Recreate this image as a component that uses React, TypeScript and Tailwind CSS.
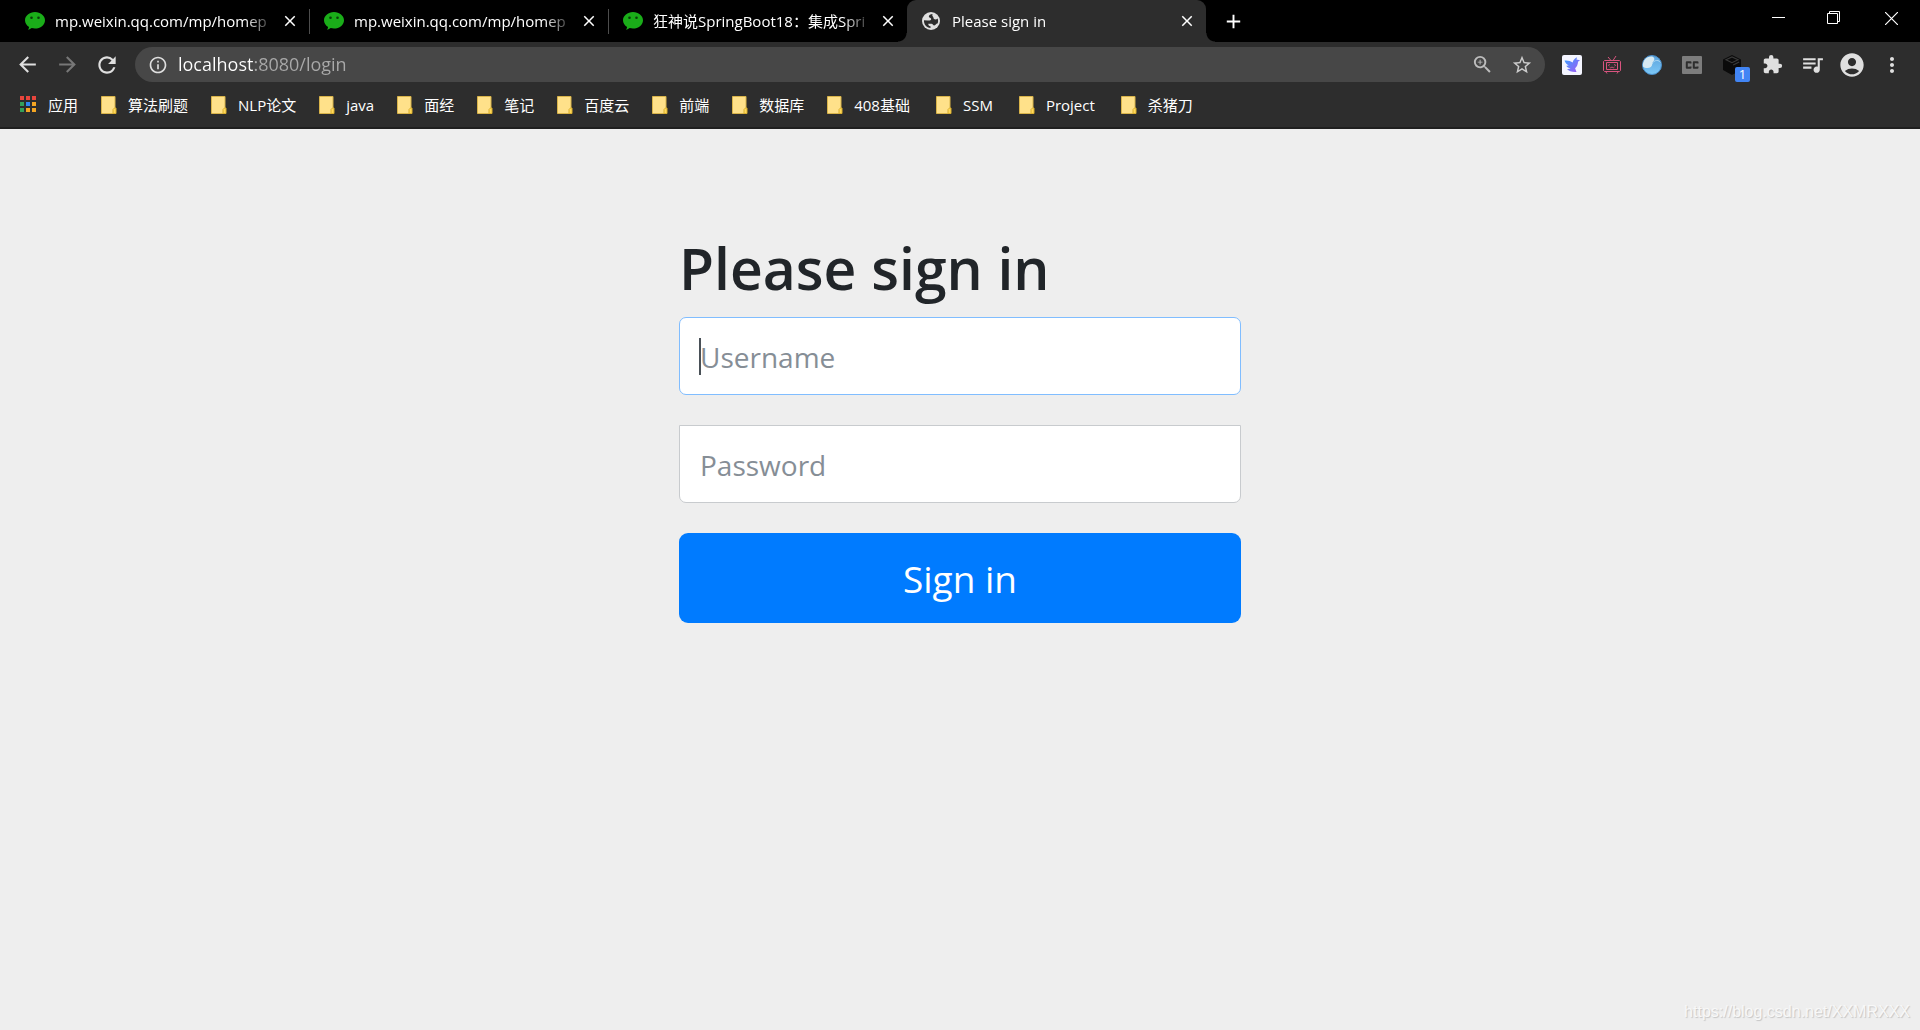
import { ReactNode } from 'react';
import {
  MdArrowBack, MdArrowForward, MdRefresh, MdInfoOutline, MdZoomIn,
  MdStarBorder, MdExtension, MdQueueMusic, MdAccountCircle, MdMoreVert, MdClose, MdAdd
} from 'react-icons/md';

const tabs = [
  { title: 'mp.weixin.qq.com/mp/homep' },
  { title: 'mp.weixin.qq.com/mp/homep' },
  { title: '狂神说SpringBoot18：集成Spri' },
  { title: 'Please sign in', active: true },
];

const bookmarks = [
  { name: '算法刷题' },
  { name: 'NLP论文' },
  { name: 'java' },
  { name: '面经' },
  { name: '笔记' },
  { name: '百度云' },
  { name: '前端' },
  { name: '数据库' },
  { name: '408基础', wide: true },
  { name: 'SSM', wide: true },
  { name: 'Project', wide: true },
  { name: '杀猪刀' },
];

const appColors = [
  '#e8453c', '#e8453c', '#e8453c',
  '#34a05a', '#2f86f0', '#f5a623',
  '#34a05a', '#f5a623', '#f5a623',
];

export default function App() {
  return (
    <div className="flex min-h-screen flex-col bg-[#eeeeee] font-['Open_Sans','Noto_Sans_CJK_SC',sans-serif]">
      <header className="border-b-2 border-[#1f1f1f] bg-[#2d2d2d] text-white">
        <TabStrip />
        <Toolbar />
        <BookmarksBar />
      </header>

      <main className="flex-1 pt-[101px]">
        <form className="mx-auto w-full max-w-[562px]" onSubmit={(e) => e.preventDefault()}>
          <h1 className="mb-[11px] text-[57px] leading-[76px] font-semibold text-[#212529]">Please sign in</h1>
          <div className="relative mb-[30px]">
            <input
              type="text"
              aria-label="Username"
              placeholder="Username"
              className="block h-[78px] w-full rounded-[7px] border border-[#80bdff] bg-white px-5 pt-0.5 text-[28px] text-[#495057] outline-none placeholder:text-[#868e96]"
            />
            {/* caret */}
            <span className="absolute top-[21px] left-5 h-[37px] w-0.5 bg-[#495057]" />
          </div>
          <input
            type="password"
            aria-label="Password"
            placeholder="Password"
            className="mb-[30px] block h-[78px] w-full rounded-b-[7px] border border-[#c8cbce] bg-white px-5 pt-0.5 text-[28px] text-[#495057] outline-none placeholder:text-[#868e96]"
          />
          <button type="submit" className="block h-[90px] w-full rounded-[9px] bg-[#007bff] pt-0.5 text-[37px] text-white">
            Sign in
          </button>
        </form>
      </main>

      <footer className="px-[10px] pb-1 text-right font-['Liberation_Sans',sans-serif] text-[16px] leading-7 text-[#f8f8f8] [text-shadow:1px_1px_1px_#c4c4c4]">
        https://blog.csdn.net/XXMRXXX
      </footer>
    </div>
  );
}

function TabStrip() {
  return (
    <div className="flex h-[42px] items-stretch bg-black pl-[10px]">
      {tabs.map((tab, i) => (
        <Tab key={i} title={tab.title} active={tab.active} divider={i < 2} />
      ))}
      <button aria-label="New tab" className="flex w-[54px] items-center justify-center">
        <MdAdd size={23} />
      </button>
      <div className="ml-auto flex h-9">
        <button aria-label="Minimize" className="flex w-14 items-center justify-center">
          <svg width="13" height="13"><path d="M0 5.5h13" stroke="#fff" /></svg>
        </button>
        <button aria-label="Restore" className="flex w-14 items-center justify-center">
          <svg width="14" height="14" fill="none" stroke="#fff"><path d="M.5 2.5h10v10H.5zM2.5 2.5V.5h10v10h-2" /></svg>
        </button>
        <button aria-label="Close window" className="flex w-[58px] items-center justify-center">
          <svg width="13" height="13" fill="none" stroke="#fff" strokeWidth="1.2"><path d="M0 0l13 13M13 0L0 13" /></svg>
        </button>
      </div>
    </div>
  );
}

function Tab({ title, active, divider }: { title: string, active?: boolean, divider: boolean }) {
  return (
    <div className={`relative flex w-[299px] items-center pr-[9px] pl-[15px] ${active ? 'rounded-t-[9px] bg-[#2d2d2d]' : ''}`}>
      {active ? <GlobeIcon /> : <WeChatIcon />}
      <span className="ml-[10px] flex-1 text-[15px] leading-6 whitespace-nowrap [mask-image:linear-gradient(to_right,#000_190px,transparent_220px)]">
        {title}
      </span>
      <button aria-label="Close tab" className="ml-1 flex w-5 shrink-0 justify-center">
        <MdClose size={18} />
      </button>
      {divider && <span className="absolute top-[9px] -right-px h-[25px] w-px bg-[#4d4d4d]" />}
      {active && (
        <>
          <span className="absolute bottom-0 -left-[9px] size-[9px] bg-[radial-gradient(circle_at_0_0,transparent_8px,#2d2d2d_9px)]" />
          <span className="absolute -right-[9px] bottom-0 size-[9px] bg-[radial-gradient(circle_at_100%_0,transparent_8px,#2d2d2d_9px)]" />
        </>
      )}
    </div>
  );
}

function Toolbar() {
  return (
    <div className="flex h-[45px] items-center pr-2 pl-[7px] text-[#dfdfdf]">
      <ToolButton label="Back"><MdArrowBack size={25} /></ToolButton>
      <ToolButton label="Forward"><MdArrowForward size={25} className="text-[#777777]" /></ToolButton>
      <ToolButton label="Reload"><MdRefresh size={26} /></ToolButton>

      <div className="mr-[7px] ml-2 flex h-[35px] flex-1 items-center rounded-full bg-[#474747] pr-[3px] pl-[13px]">
        <MdInfoOutline size={20} />
        <input
          type="text"
          aria-label="Address"
          defaultValue="localhost:8080/login"
          className="ml-[10px] min-w-0 flex-1 bg-[linear-gradient(to_right,#fff_76px,#a9a9a9_76px)] bg-clip-text text-[18px] text-transparent outline-none"
        />
        <ToolButton label="Zoom"><MdZoomIn size={23} className="text-[#bdbdbd]" /></ToolButton>
        <ToolButton label="Bookmark this page"><MdStarBorder size={22} className="text-[#cccccc]" /></ToolButton>
      </div>

      <ToolButton label="Bird"><BirdIcon /></ToolButton>
      <ToolButton label="Video"><TvIcon /></ToolButton>
      <ToolButton label="Wave"><WaveIcon /></ToolButton>
      <ToolButton label="Captions"><CaptionIcon /></ToolButton>
      <ToolButton label="Box">
        <BoxIcon />
        <span className="absolute top-5 left-[23px] h-[15px] w-[15px] rounded-[2px] bg-[#4285f4] text-center text-[13px] leading-[15px] text-white">1</span>
      </ToolButton>
      <ToolButton label="Extensions"><MdExtension size={21} /></ToolButton>
      <ToolButton label="Media"><MdQueueMusic size={25} /></ToolButton>
      <ToolButton label="Profile"><MdAccountCircle size={28} /></ToolButton>
      <ToolButton label="Menu"><MdMoreVert size={24} /></ToolButton>
    </div>
  );
}

function ToolButton({ label, children }: { label: string, children: ReactNode }) {
  return (
    <button aria-label={label} className="relative flex h-9 w-10 shrink-0 items-center justify-center">
      {children}
    </button>
  );
}

function BookmarksBar() {
  return (
    <nav className="flex h-10 items-center gap-[23px] pb-[5px] pl-5 text-[15px] leading-6 whitespace-nowrap">
      <a href="#" className="flex items-center gap-[11px]">
        <svg width="17" height="17">
          {appColors.map((color, i) => (
            <rect key={i} x={(i % 3) * 6} y={Math.floor(i / 3) * 6} width="4" height="4" fill={color} />
          ))}
        </svg>
        应用
      </a>
      {bookmarks.map(({ name, wide }) => (
        <a key={name} href="#" className={`flex items-center gap-[11px] ${wide ? 'pr-[3px]' : ''}`}>
          <svg width="16" height="18">
            <path d="M.5 .5h13.500v17H.5z" fill="#ffe18a" stroke="#d9b44a" />
            <path d="M12 17.500v-4l1.500-1.500h1.500v5.500z" fill="#ffd95a" stroke="#d9ae2e" />
          </svg>
          {name}
        </a>
      ))}
    </nav>
  );
}

function WeChatIcon() {
  return (
    <svg width="20" height="18" viewBox="0 0 20 18" className="shrink-0">
      <path d="M10 0c5.500 0 10 3.700 10 8.300s-4.500 8.300-10 8.300c-1.200 0-2.300-.2-3.300-.5L3.300 18l.8-3C1.600 13.500 0 11.100 0 8.300 0 3.700 4.500 0 10 0z" fill="#1aad19" />
      <circle cx="6.500" cy="5.800" r="1.300" fill="#0a3d0a" />
      <circle cx="13.500" cy="5.800" r="1.300" fill="#0a3d0a" />
    </svg>
  );
}

function GlobeIcon() {
  return (
    <svg width="20" height="18" viewBox="0 0 20 18" className="shrink-0">
      <circle cx="9" cy="9" r="9" fill="#dfdfdf" />
      <path d="M10.500 2C8.500 2.300 7 3 6.800 4.500c-.1 1.500 2.400 1.300 2.400 2.600C9.200 8.600 7 8.700 5.500 8.500L2 8.200c-.4 4 2.500 7.500 6.500 7.800v-1.700c-1.500-.3-2.400-1.400-2.200-2.600h3.200c1.500 0 1.500 1.800 2.800 1.800 1.500 0 1.500-1.800 3.200-1.900.8-1.700.8-3.600.1-5.200-.8.900-1.900 1.200-3.100.9-1.400-.4-.7-2-1.600-2.700-.8-.6-.6-1.600-.4-2.600z" fill="#2d2d2d" />
    </svg>
  );
}

function BirdIcon() {
  return (
    <svg width="20" height="20" viewBox="0 0 20 20">
      <defs>
        <linearGradient id="bird" x1="0" y1="0" x2="1" y2="1">
          <stop offset="0" stopColor="#35a2ff" />
          <stop offset="1" stopColor="#a455f5" />
        </linearGradient>
      </defs>
      <rect width="20" height="20" rx="2" fill="#f4f5ff" />
      <path d="M2.500 5.500c3.200-.4 6 .3 8.200 1.900.5-2.300 1.900-4 4.300-5.200l-.5 2.600c1.400-.4 2.700 0 3.500.9l-1.900.8c-.2 3-1.200 5.300-3 6.700l1.400 3.800c-4.300.3-7.700-.9-9.500-3 1.600.1 2.800-.2 3.600-.7-2-.3-3.600-1.300-4.300-2.600l2.400-.2C4.700 9.500 3.200 7.800 2.500 5.500z" fill="url(#bird)" />
    </svg>
  );
}

function TvIcon() {
  return (
    <svg width="18" height="20" viewBox="0 0 18 20" fill="none" stroke="#d9547f">
      <path d="M5 2l3 3.500M13 1l-3 4.500M1.500 5.500h15l1 1v9l-1 1h-15l-1-1v-9zM3.500 7.500h11v7h-11zM3 17l1 1.500M15 17l-1 1.500" />
      <path d="M5 10.500l2-1M11 9.500l2 1M6.500 12l1.200.8L9 12l1.300.8 1.200-.8" strokeWidth=".9" />
    </svg>
  );
}

function WaveIcon() {
  return (
    <svg width="20" height="20" viewBox="0 0 20 20">
      <defs>
        <linearGradient id="wave" x1="0" y1="0" x2="0" y2="1">
          <stop offset="0" stopColor="#5ba3dc" />
          <stop offset="1" stopColor="#7cc8f7" />
        </linearGradient>
      </defs>
      <circle cx="10" cy="10" r="9.500" fill="url(#wave)" stroke="#4a8fcb" />
      <path d="M1 11.500C.3 5.500 4.500 1.500 9 1.500c2.800 0 4 2 3 4-.6 1.200-1.500 1.800-1.700 3.500-.3 2.500-2 4-4.800 4-2 0-3.500-.5-4.500-1.500z" fill="#d6e9f2" />
      <path d="M10.300 9c.4-2 2.200-3.500 4.500-3.500 1.700 0 3 .7 3.700 2" fill="none" stroke="#a9d6f2" />
    </svg>
  );
}

function CaptionIcon() {
  return (
    <svg width="20" height="18" viewBox="0 0 20 18">
      <rect width="20" height="18" rx="1" fill="#7d7d7d" />
      <path d="M8.500 7.500V6.200H4.800v5.600h3.700v-1.300M15.500 7.500V6.200h-3.700v5.600h3.700v-1.300" fill="none" stroke="#2d2d2d" strokeWidth="2" strokeLinejoin="round" />
    </svg>
  );
}

function BoxIcon() {
  return (
    <svg width="20" height="20" viewBox="0 0 20 20">
      <path d="M10 0l9 4.500v10.500L10 20l-9-5V4.500z" fill="#0b0b0b" />
      <path d="M4 4.800L10 2l6 2.800-6 2.900zM11.200 10l6-3" fill="none" stroke="#3a3a3a" strokeWidth="1.200" />
    </svg>
  );
}
